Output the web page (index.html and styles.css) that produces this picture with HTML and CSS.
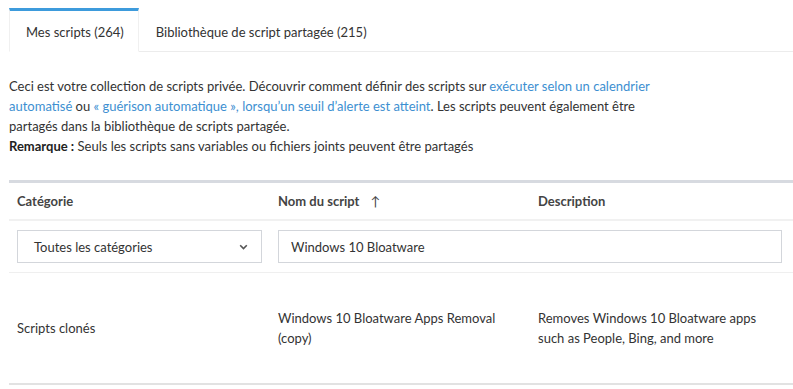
FILE: index.html
```html
<!DOCTYPE html>
<html lang="fr">

<head>
    <meta charset="UTF-8">
    <meta name="viewport" content="width=device-width, initial-scale=1.0">
    <title>Mes scripts</title>
    <link rel="stylesheet" href="styles.css">
</head>

<body>
    <div class="page">
        <div class="tabs">
            <div class="tab active">Mes scripts (264)</div>
            <div class="tab">Bibliothèque de script partagée (215)</div>
            <div class="tab-fill"></div>
        </div>

        <div class="intro">
            <p>Ceci est votre collection de scripts privée. Découvrir comment définir des scripts sur <a href="#">exécuter selon un calendrier automatisé</a> ou <a href="#">« guérison automatique », lorsqu’un seuil d’alerte est atteint</a>. Les scripts peuvent également être partagés dans la bibliothèque de scripts partagée.</p>
            <p><strong>Remarque :</strong> Seuls les scripts sans variables ou fichiers joints peuvent être partagés</p>
        </div>

        <table class="scripts">
            <thead>
                <tr>
                    <th class="col-cat">Catégorie</th>
                    <th class="col-name">Nom du script <span class="sort">&#8593;</span></th>
                    <th>Description</th>
                </tr>
            </thead>
            <tbody>
                <tr class="filters">
                    <td>
                        <div class="select">
                            <span>Toutes les catégories</span>
                            <svg width="9" height="6" viewBox="0 0 9 6"><path d="M1.2 1.2 L4.5 4.5 L7.8 1.2" fill="none" stroke="#555" stroke-width="1.6"/></svg>
                        </div>
                    </td>
                    <td colspan="2" class="search-cell">
                        <input type="text" value="Windows 10 Bloatware">
                    </td>
                </tr>
                <tr class="row">
                    <td>Scripts clonés</td>
                    <td>Windows 10 Bloatware Apps Removal (copy)</td>
                    <td>Removes Windows 10 Bloatware apps such as People, Bing, and more</td>
                </tr>
            </tbody>
        </table>
    </div>
</body>

</html>
```

FILE: styles.css
```css
body {
    margin: 0;
    font-family: Lato, "Liberation Sans", sans-serif;
    font-size: 13px;
    color: #333;
    background-color: #ffffff;
}

.page {
    padding: 8px 0 0 9px;
}

.tabs {
    display: flex;
}

.tab {
    padding: 0 16px 0 17px;
    height: 40px;
    line-height: 42px;
    border-top: 3px solid transparent;
    border-bottom: 1px solid #ececec;
    color: #333;
}

.tab.active {
    border-top-color: #3d9bdc;
    border-left: 1px solid #f0f0f0;
    border-right: 1px solid #f0f0f0;
    border-bottom-color: transparent;
    padding-left: 16px;
    padding-right: 14px;
}

.tab-fill {
    flex: 1;
    border-bottom: 1px solid #ececec;
}

.intro {
    margin-top: 24px;
    width: 670px;
    line-height: 20px;
}

.intro p {
    margin: 0;
}

.intro a {
    color: #3d8fd1;
    text-decoration: none;
}

.intro strong {
    color: #222;
}

.scripts {
    margin-top: 24px;
    width: 784px;
    border-collapse: collapse;
    border-top: 3px solid #d7dae0;
    border-bottom: 2px solid #e2e2e2;
}

.scripts th {
    text-align: left;
    font-weight: bold;
    color: #444;
    height: 36px;
    padding: 0 8px;
    border-bottom: 2px solid #f1f1f1;
}

.col-cat {
    width: 245px;
}

.col-name {
    width: 244px;
}

.sort {
    margin-left: 8px;
    font-weight: normal;
}

.scripts td {
    padding: 0 8px;
    vertical-align: middle;
}

.filters td {
    height: 51px;
    border-bottom: 1px solid #efefef;
}

.select {
    height: 31px;
    border: 1px solid #d3d6db;
    display: flex;
    align-items: center;
    justify-content: space-between;
    padding: 0 13px 0 16px;
}

.search-cell {
    padding-right: 11px !important;
}

.search-cell input {
    box-sizing: border-box;
    width: 100%;
    height: 33px;
    border: 1px solid #d3d6db;
    padding: 0 12px;
    font-family: inherit;
    font-size: 13px;
    color: #333;
    outline: none;
}

.row td {
    height: 110px;
    line-height: 20px;
}
```
